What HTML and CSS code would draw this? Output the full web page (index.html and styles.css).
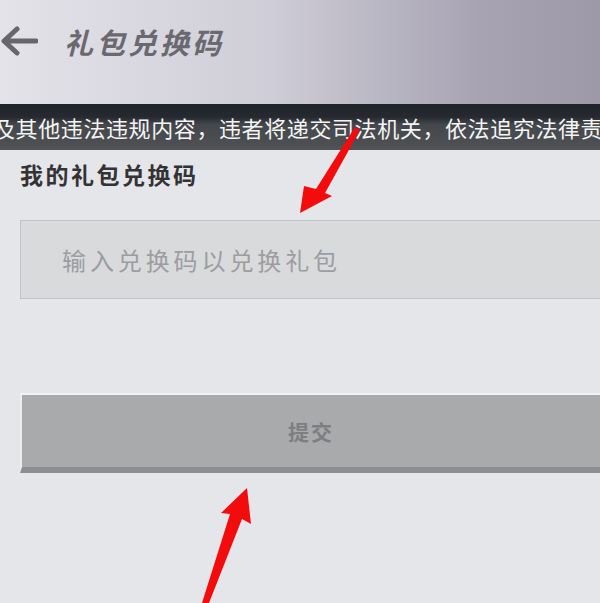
FILE: index.html
```html
<!DOCTYPE html>
<html>
	<head>
		<meta charset="UTF-8">
		<meta name="viewport" content="width=device-width, initial-scale=1">
		<title>礼包兑换码</title>
		<link rel="stylesheet" href="styles.css">
	</head>
	<body>
		<div class="page">
			<div class="top-bar">
				<svg class="back" width="38" height="30" viewBox="0 0 38 30">
					<path d="M36 15 H5 M17 3 L4 15 L17 27" fill="none" stroke="#67666d" stroke-width="5" stroke-linecap="round" stroke-linejoin="round"/>
				</svg>
				<span class="title">礼包兑换码</span>
			</div>
			<div class="notice">
				<span class="notice-text">及其他违法违规内容，违者将递交司法机关，依法追究法律责任</span>
			</div>
			<div class="content">
				<div class="label">我的礼包兑换码</div>
				<input class="code-input" type="text" placeholder="输入兑换码以兑换礼包">
				<div class="submit">提交</div>
			</div>
		</div>

		<!-- 标注箭头 -->
		<svg class="marks" width="600" height="603" viewBox="0 0 600 603">
			<polygon fill="#f40b0b" points="355,127 360,130 325,193 332,196 300,213 304,186 316,189"/>
			<polygon fill="#f40b0b" points="247,488 251,524 242,519 209,603 202,603 230,514 221,513"/>
		</svg>
	</body>
</html>
```

FILE: styles.css
```css
body{
margin: 0;
background: #e5e6e9;
font-family: "Noto Sans CJK SC", "Noto Sans", sans-serif;
}
.page{
width: 600px;
height: 603px;
overflow: hidden;
}
.top-bar{
height: 104px;
display: flex;
align-items: center;
padding-bottom: 22px;
box-sizing: border-box;
background: linear-gradient(90deg, #e4e3e9 0%, #cfcdd7 45%, #a7a3b3 80%, #9d99a9 100%);
}
.title{
margin-left: 26px;
font-size: 29px;
font-weight: bold;
font-style: italic;
letter-spacing: 3px;
color: #6a6970;
}
.notice{
height: 46px;
display: flex;
align-items: center;
overflow: hidden;
white-space: nowrap;
background: linear-gradient(180deg, #1f232a 0%, #262a30 28%, #44474b 45%, #505255 100%);
}
.notice-text{
margin-left: -7px;
font-size: 22px;
letter-spacing: 0.6px;
color: #f4f4f4;
}
.content{
padding: 6px 0 0 20px;
display: flex;
flex-direction: column;
}
.label{
font-size: 23px;
font-weight: bold;
letter-spacing: 2.5px;
color: #333335;
line-height: 36px;
}
.code-input{
margin-top: 28px;
height: 79px;
box-sizing: border-box;
border: 1px solid #c3c4c6;
border-right: none;
background: #d9dadc;
padding: 0 0 0 41px;
font-family: inherit;
font-size: 24px;
letter-spacing: 3.9px;
outline: none;
}
.code-input::placeholder{
color: #9c9da1;
}
.submit{
margin-top: 94px;
height: 80px;
box-sizing: border-box;
border-top: 2px solid #f2f2f3;
border-left: 2px solid #ededee;
border-bottom: 6px solid #8d8e91;
background: #a9aaac;
display: flex;
align-items: center;
justify-content: center;
font-size: 21px;
font-weight: bold;
letter-spacing: 2px;
color: #7d7e82;
}
.marks{
position: absolute;
left: 0;
top: 0;
pointer-events: none;
}
```
